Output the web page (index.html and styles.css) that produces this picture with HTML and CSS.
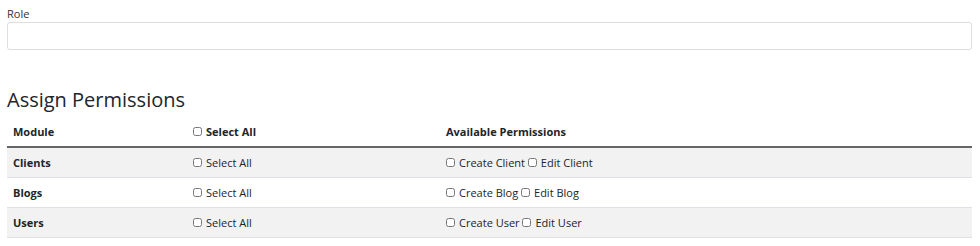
FILE: index.html
```html
<!DOCTYPE html>
<html lang="en">
<head>
    <meta charset="UTF-8">
    <title>Role permissions</title>
    <link rel="stylesheet" href="styles.css">
</head>
<body>
    <div class="form-group">
        <label for="role">Role</label>
        <input type="text" id="role" class="form-control">
    </div>

    <h4>Assign Permissions</h4>
    <table class="table">
        <thead>
            <tr>
                <th class="col-module">Module</th>
                <th class="col-all"><label><input type="checkbox"> Select All</label></th>
                <th>Available Permissions</th>
            </tr>
        </thead>
        <tbody>
            <tr>
                <th>Clients</th>
                <td><label><input type="checkbox"> Select All</label></td>
                <td><label><input type="checkbox"> Create Client</label> <label><input type="checkbox"> Edit Client</label></td>
            </tr>
            <tr>
                <th>Blogs</th>
                <td><label><input type="checkbox"> Select All</label></td>
                <td><label><input type="checkbox"> Create Blog</label> <label><input type="checkbox"> Edit Blog</label></td>
            </tr>
            <tr>
                <th>Users</th>
                <td><label><input type="checkbox"> Select All</label></td>
                <td><label><input type="checkbox"> Create User</label> <label><input type="checkbox"> Edit User</label></td>
            </tr>
        </tbody>
    </table>
</body>
</html>
```

FILE: styles.css
```css
body {
    font-family: 'Open Sans', 'Noto Sans', sans-serif;
    font-size: 11px;
    color: #212529;
    background-color: #fff;
    margin: 0;
    padding: 6px 8px 0 7px;
}
.form-group label {
    display: block;
    line-height: 15px;
    margin-bottom: 1px;
    color: #333;
}
.form-control {
    display: block;
    width: 100%;
    height: 28px;
    box-sizing: border-box;
    border: 1px solid #dedede;
    border-radius: 3px;
    margin: 0;
}
h4 {
    font-size: 20px;
    font-weight: 500;
    line-height: 24px;
    margin: 38px 0 4px;
    color: #212529;
}
.table {
    width: 100%;
    border-collapse: collapse;
}
.table th,
.table td {
    text-align: left;
    padding: 0 6px;
    height: 29px;
    border-top: 1px solid #dee2e6;
    white-space: nowrap;
}
.table thead th {
    border-top: none;
    border-bottom: 2px solid #666;
    height: 30px;
}
.table tbody tr:nth-child(odd) {
    background-color: #f2f2f2;
}
.table tbody tr:last-child th,
.table tbody tr:last-child td {
    border-bottom: 1px solid #dee2e6;
}
.col-module {
    width: 168px;
}
.col-all {
    width: 241px;
}
.table td {
    font-weight: normal;
}
.table label {
    display: inline-flex;
    align-items: center;
}
.table input[type="checkbox"] {
    width: 9px;
    height: 9px;
    margin: 0 4px 0 0;
}
```
